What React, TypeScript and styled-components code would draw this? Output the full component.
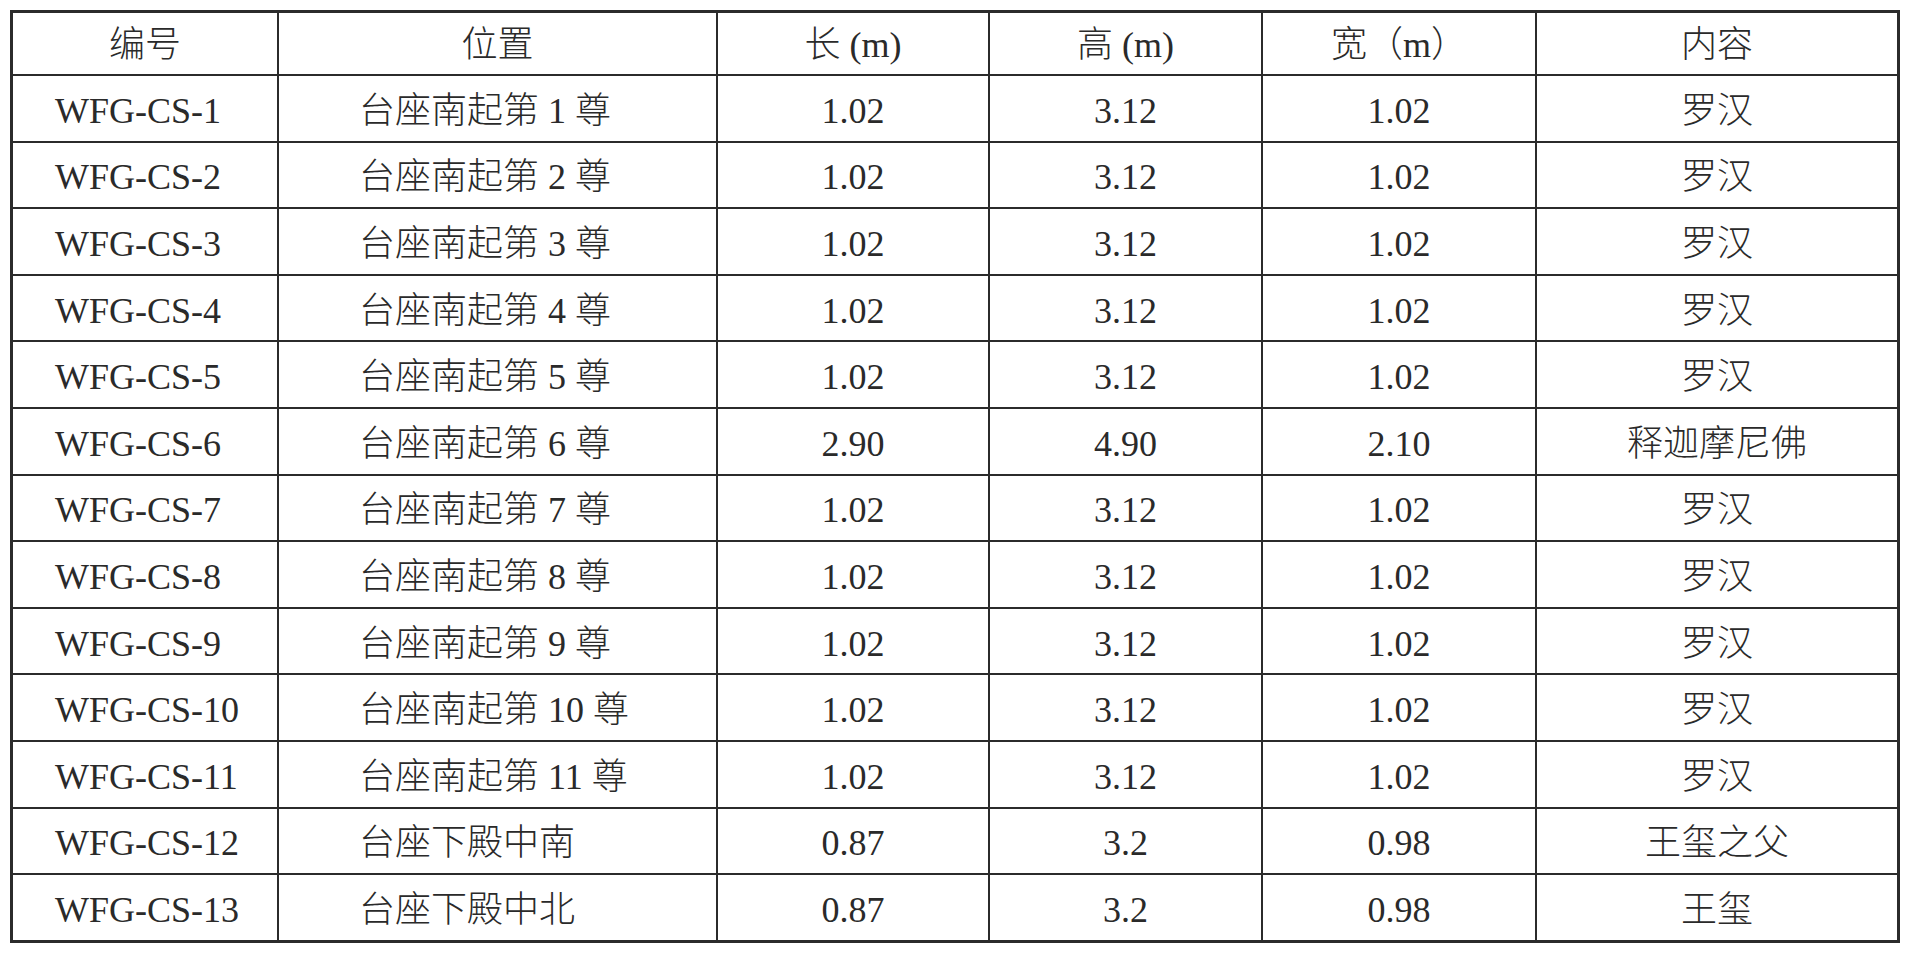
import { Fragment } from 'react'
import styled, { createGlobalStyle } from 'styled-components'

const GlobalStyle = createGlobalStyle`
  html, body {
    margin: 0;
    padding: 0;
    background: #ffffff;
  }
  body {
    font-family: 'Liberation Serif', 'Noto Sans CJK SC', serif;
    color: #2a2a2a;
  }
`

const Page = styled.div`
  padding: 10px 0 0 10px;
  width: 1915px;
  height: 969px;
  box-sizing: border-box;
`

const Table = styled.div`
  display: grid;
  width: 1890px;
  box-sizing: border-box;
  grid-template-columns: 264px 437px 270px 271px 272px 360px;
  grid-template-rows: 61px repeat(13, 64.6px);
  gap: 2px;
  background: #2b2b2b;
  border: 3px solid #2b2b2b;
`

const Cell = styled.div<{ $align: 'left' | 'center'; $indent?: number }>`
  background: #ffffff;
  display: flex;
  align-items: center;
  justify-content: ${({ $align }) => ($align === 'left' ? 'flex-start' : 'center')};
  padding-left: ${({ $indent }) => ($indent ? `${$indent}px` : '0')};
  padding-top: 5px;
  font-size: 36px;
  font-weight: 300;
  line-height: 1;
  white-space: nowrap;
  color: #2a2a2a;
`

const HeaderCell = styled(Cell)`
  padding-top: 3px;
`

type Row = {
  id: string
  place: string
  length: string
  height: string
  width: string
  content: string
}

const rows: Row[] = [
  ...Array.from({ length: 11 }, (_, i) => ({
    id: `WFG-CS-${i + 1}`,
    place: `台座南起第 ${i + 1} 尊`,
    length: i === 5 ? '2.90' : '1.02',
    height: i === 5 ? '4.90' : '3.12',
    width: i === 5 ? '2.10' : '1.02',
    content: i === 5 ? '释迦摩尼佛' : '罗汉',
  })),
  { id: 'WFG-CS-12', place: '台座下殿中南', length: '0.87', height: '3.2', width: '0.98', content: '王玺之父' },
  { id: 'WFG-CS-13', place: '台座下殿中北', length: '0.87', height: '3.2', width: '0.98', content: '王玺' },
]

const headers = ['编号', '位置', '长 (m)', '高 (m)', '宽（m）', '内容']

export default function App() {
  return (
    <>
      <GlobalStyle />
      <Page>
        <Table>
          {headers.map((h) => (
            <HeaderCell key={h} $align="center">
              {h}
            </HeaderCell>
          ))}
          {rows.map((r) => (
            <Fragment key={r.id}>
              <Cell $align="left" $indent={42}>
                {r.id}
              </Cell>
              <Cell $align="left" $indent={80}>
                {r.place}
              </Cell>
              <Cell $align="center">{r.length}</Cell>
              <Cell $align="center">{r.height}</Cell>
              <Cell $align="center">{r.width}</Cell>
              <Cell $align="center">{r.content}</Cell>
            </Fragment>
          ))}
        </Table>
      </Page>
    </>
  )
}
